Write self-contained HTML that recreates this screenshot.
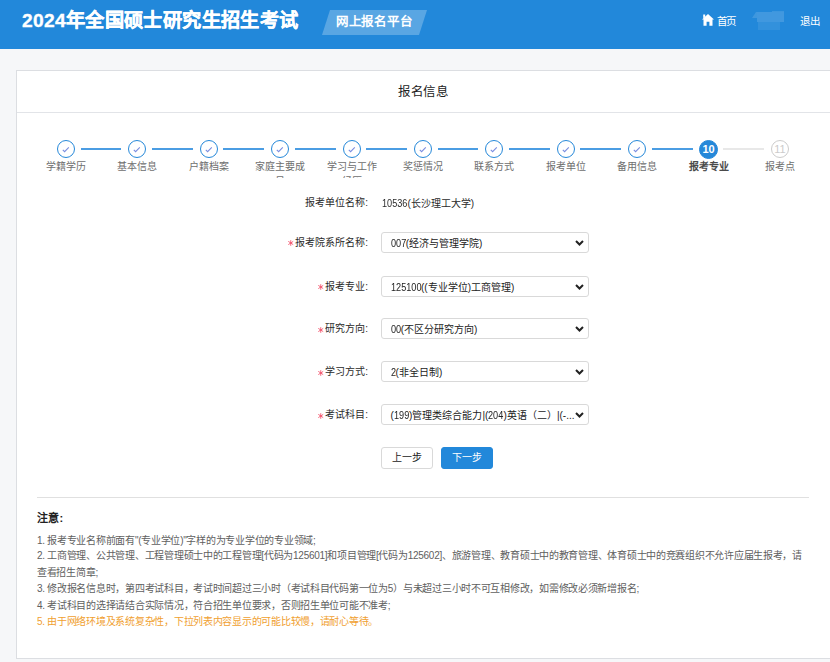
<!DOCTYPE html>
<html lang="zh-CN"><head><meta charset="utf-8">
<style>
*{margin:0;padding:0;box-sizing:border-box}
html,body{width:830px;height:662px;overflow:hidden;background:#f6f7f9;font-family:"Liberation Sans",sans-serif;color:#333}
.hdr{position:absolute;left:0;top:0;width:830px;height:49px;background:#2288da}
.ttl{position:absolute;left:22px;top:7.3px;font-size:19.2px;letter-spacing:0.35px;font-weight:bold;color:#fff;-webkit-text-stroke:0.35px #fff;line-height:28px;white-space:nowrap}
.badge{position:absolute;left:322px;top:10px;width:106px;height:25px}
.badge svg{position:absolute;left:0;top:0}
.badge span{position:absolute;left:14px;top:0;line-height:25px;font-size:12.5px;letter-spacing:-0.3px;font-weight:bold;color:#fff;white-space:nowrap}
.nav{position:absolute;top:12px;line-height:20px;font-size:11px;color:#fff;white-space:nowrap}
.card{position:absolute;left:16px;top:70px;width:830px;height:589px;background:#fff;border:1px solid #dcdee2}
.ch{position:absolute;left:0;top:0;width:100%;height:42px;border-bottom:1px solid #e2e4e8}
.ch span{position:absolute;left:381px;top:12.5px;font-size:12.5px;letter-spacing:-0.3px;line-height:16px;color:#222;white-space:nowrap}
.st{position:absolute;top:140px;width:18px;height:18px;border-radius:50%;border:1.3px solid #2588d9}
.st svg{position:absolute;left:4px;top:5px}
.ln{position:absolute;top:148.3px;height:1.5px;background:#4b9de3}
.ln.g{background:#e8e8e8}
.lb{position:absolute;top:159px;width:52px;height:19px;overflow:hidden;text-align:center;font-size:10px;line-height:15px;color:#6e6e6e;font-weight:500}
.fl{position:absolute;left:0;width:368px;font-size:10px;line-height:14px;color:#2a2a2a;font-weight:500;white-space:nowrap;text-align:right}
.fv{position:absolute;left:382px;font-size:10px;line-height:14px;color:#2a2a2a;font-weight:500;white-space:nowrap}
.n{display:inline-block;font-size:11px;transform:scaleX(.83);transform-origin:0 50%}
.fl b{color:#f04848;font-weight:normal;margin-right:2px;position:relative;top:2px;font-size:11px}
.sel{position:absolute;left:381px;width:207.5px;height:21.5px;border:1px solid #d9d9d9;border-radius:3px;background:#fff}
.sel>span{position:absolute;left:8.5px;top:3.5px;font-size:10px;line-height:14px;color:#222;font-weight:500;white-space:nowrap}
.sel svg{position:absolute;right:3.5px;top:7.3px}
.btn{position:absolute;top:447.3px;height:21.5px;border-radius:2px;font-size:10px;line-height:19.5px;text-align:center}
.note{position:absolute;left:37px;font-size:10px;letter-spacing:-0.27px;line-height:14px;color:#606060;white-space:nowrap}
</style></head><body>
<div class="hdr">
  <div class="ttl">2024年全国硕士研究生招生考试</div>
  <div class="badge"><svg width="106" height="25"><polygon points="8,0 105,0 97,25 0,25" fill="rgba(255,255,255,0.25)"/></svg><span>网上报名平台</span></div>
  <svg style="position:absolute;left:702px;top:14px" width="12" height="12"><path d="M6 0 L0 5.6 L1.5 5.6 L1.5 11.7 L4.6 11.7 L4.6 7.8 L7.4 7.8 L7.4 11.7 L10.5 11.7 L10.5 5.6 L12 5.6 Z M1.2 0.6 H3.2 V2.4 L1.2 4.2 Z" fill="#fff"/></svg>
  <div class="nav" style="left:717px;top:11px;font-size:10.5px;letter-spacing:-0.8px">首页</div>
  <div style="position:absolute;left:757px;top:12px;width:27px;height:10px;background:rgba(255,255,255,0.14);filter:blur(0.6px)"></div><div style="position:absolute;left:772px;top:11px;width:12px;height:1px;background:rgba(255,255,255,0.12);filter:blur(0.4px)"></div>
  <svg style="position:absolute;left:751px;top:11px;filter:blur(0.5px)" width="8" height="8"><polygon points="5,1 6,1 6,7 1,7" fill="rgba(255,255,255,0.13)"/></svg>
  <div style="position:absolute;left:758px;top:22px;width:22px;height:8px;background:rgba(255,255,255,0.08);filter:blur(0.6px)"></div>
  <div class="nav" style="left:800px;top:11px;font-size:10.5px">退出</div>
</div>
<div class="card">
  <div class="ch"><span>报名信息</span></div>
</div>
<div id="steps"><div class="st" style="left:57px"><svg width="10" height="8"><path d="M0.8 3.8 L2.6 5.6 L6.8 1.4" stroke="#7a8de0" stroke-width="1.1" fill="none"></path></svg></div><div class="lb" style="left:40px;">学籍学历</div><div class="ln" style="left:80.5px;width:40.900000000000006px"></div><div class="st" style="left:128.4px"><svg width="10" height="8"><path d="M0.8 3.8 L2.6 5.6 L6.8 1.4" stroke="#7a8de0" stroke-width="1.1" fill="none"></path></svg></div><div class="lb" style="left:111.4px;">基本信息</div><div class="ln" style="left:151.9px;width:40.900000000000006px"></div><div class="st" style="left:199.8px"><svg width="10" height="8"><path d="M0.8 3.8 L2.6 5.6 L6.8 1.4" stroke="#7a8de0" stroke-width="1.1" fill="none"></path></svg></div><div class="lb" style="left:182.8px;">户籍档案</div><div class="ln" style="left:223.30000000000004px;width:40.900000000000006px"></div><div class="st" style="left:271.20000000000005px"><svg width="10" height="8"><path d="M0.8 3.8 L2.6 5.6 L6.8 1.4" stroke="#7a8de0" stroke-width="1.1" fill="none"></path></svg></div><div class="lb" style="left:254.20000000000005px;">家庭主要成员</div><div class="ln" style="left:294.70000000000005px;width:40.89999999999998px"></div><div class="st" style="left:342.6px"><svg width="10" height="8"><path d="M0.8 3.8 L2.6 5.6 L6.8 1.4" stroke="#7a8de0" stroke-width="1.1" fill="none"></path></svg></div><div class="lb" style="left:325.6px;">学习与工作经历</div><div class="ln" style="left:366.1px;width:40.89999999999998px"></div><div class="st" style="left:414px"><svg width="10" height="8"><path d="M0.8 3.8 L2.6 5.6 L6.8 1.4" stroke="#7a8de0" stroke-width="1.1" fill="none"></path></svg></div><div class="lb" style="left:397px;">奖惩情况</div><div class="ln" style="left:437.5px;width:40.900000000000034px"></div><div class="st" style="left:485.40000000000003px"><svg width="10" height="8"><path d="M0.8 3.8 L2.6 5.6 L6.8 1.4" stroke="#7a8de0" stroke-width="1.1" fill="none"></path></svg></div><div class="lb" style="left:468.40000000000003px;">联系方式</div><div class="ln" style="left:508.9000000000001px;width:40.89999999999998px"></div><div class="st" style="left:556.8000000000001px"><svg width="10" height="8"><path d="M0.8 3.8 L2.6 5.6 L6.8 1.4" stroke="#7a8de0" stroke-width="1.1" fill="none"></path></svg></div><div class="lb" style="left:539.8000000000001px;">报考单位</div><div class="ln" style="left:580.3000000000001px;width:40.89999999999998px"></div><div class="st" style="left:628.2px"><svg width="10" height="8"><path d="M0.8 3.8 L2.6 5.6 L6.8 1.4" stroke="#7a8de0" stroke-width="1.1" fill="none"></path></svg></div><div class="lb" style="left:611.2px;">备用信息</div><div class="ln" style="left:651.7px;width:40.89999999999998px"></div><div class="st" style="left:699.1px;width:19px;height:19px;background:#2588d9;color:#fff;font-size:11px;font-weight:bold;line-height:17px;text-align:center">10</div><div class="lb" style="left:682.6px;color:#4a4a4a;font-weight:bold;">报考专业</div><div class="ln g" style="left:723.1px;width:40.89999999999998px"></div><div class="st" style="left:771px;border-color:#ccc;color:#ccc;font-size:11px;line-height:16px;text-align:center">11</div><div class="lb" style="left:754px;">报考点</div></div>
<div class="fl" style="top:196px">报考单位名称:</div>
<div class="fv" style="top:196px"><span class="n" style="margin-right:-5.20px">10536</span>(长沙理工大学)</div>

<div class="fl" style="top:235.7px"><svg width="5.5" height="6" style="margin-right:1.5px;vertical-align:-0.5px"><path d="M2.75 0.2 V5.8 M0.3 1.4 L5.2 4.6 M0.3 4.6 L5.2 1.4" stroke="#f24c66" stroke-width="0.85"/></svg>报考院系所名称:</div>
<div class="sel" style="top:231.5px"><span><span class="n" style="margin-right:-3.12px">007</span>(经济与管理学院)</span><svg width="9" height="6"><path d="M1 1 L4.5 4.5 L8 1" stroke="#222" stroke-width="2" fill="none"/></svg></div>

<div class="fl" style="top:279.5px"><svg width="5.5" height="6" style="margin-right:1.5px;vertical-align:-0.5px"><path d="M2.75 0.2 V5.8 M0.3 1.4 L5.2 4.6 M0.3 4.6 L5.2 1.4" stroke="#f24c66" stroke-width="0.85"/></svg>报考专业:</div>
<div class="sel" style="top:275.5px"><span><span class="n" style="margin-right:-6.24px">125100</span>((专业学位)工商管理)</span><svg width="9" height="6"><path d="M1 1 L4.5 4.5 L8 1" stroke="#222" stroke-width="2" fill="none"/></svg></div>

<div class="fl" style="top:322px"><svg width="5.5" height="6" style="margin-right:1.5px;vertical-align:-0.5px"><path d="M2.75 0.2 V5.8 M0.3 1.4 L5.2 4.6 M0.3 4.6 L5.2 1.4" stroke="#f24c66" stroke-width="0.85"/></svg>研究方向:</div>
<div class="sel" style="top:317.5px"><span><span class="n" style="margin-right:-2.08px">00</span>(不区分研究方向)</span><svg width="9" height="6"><path d="M1 1 L4.5 4.5 L8 1" stroke="#222" stroke-width="2" fill="none"/></svg></div>

<div class="fl" style="top:365px"><svg width="5.5" height="6" style="margin-right:1.5px;vertical-align:-0.5px"><path d="M2.75 0.2 V5.8 M0.3 1.4 L5.2 4.6 M0.3 4.6 L5.2 1.4" stroke="#f24c66" stroke-width="0.85"/></svg>学习方式:</div>
<div class="sel" style="top:360.5px"><span><span class="n" style="margin-right:-1.04px">2</span>(非全日制)</span><svg width="9" height="6"><path d="M1 1 L4.5 4.5 L8 1" stroke="#222" stroke-width="2" fill="none"/></svg></div>

<div class="fl" style="top:408px"><svg width="5.5" height="6" style="margin-right:1.5px;vertical-align:-0.5px"><path d="M2.75 0.2 V5.8 M0.3 1.4 L5.2 4.6 M0.3 4.6 L5.2 1.4" stroke="#f24c66" stroke-width="0.85"/></svg>考试科目:</div>
<div class="sel" style="top:403.5px"><span>(<span class="n" style="margin-right:-3.12px">199</span>)管理类综合能力|(<span class="n" style="margin-right:-3.12px">204</span>)英语（二）|(-...</span><svg width="9" height="6"><path d="M1 1 L4.5 4.5 L8 1" stroke="#222" stroke-width="2" fill="none"/></svg></div>

<div class="btn" style="left:381px;width:52px;border:1px solid #d9d9d9;background:#fff;color:#222;border-radius:3px">上一步</div>
<div class="btn" style="left:441px;width:52px;background:#2288da;color:#fff;border:1px solid #2288da;border-radius:3px">下一步</div>

<div style="position:absolute;left:37px;top:497px;width:772px;height:1px;background:#e0e0e0"></div>
<div class="note" style="top:511px;font-size:11px;font-weight:bold;color:#222;letter-spacing:0.3px">注意:</div>
<div class="note" style="top:533.7px">1. 报考专业名称前面有"(专业学位)"字样的为专业学位的专业领域;</div>
<div class="note" style="top:549px">2. 工商管理、公共管理、工程管理硕士中的工程管理[代码为125601]和项目管理[代码为125602]、旅游管理、教育硕士中的教育管理、体育硕士中的竞赛组织不允许应届生报考，请</div>
<div class="note" style="top:566px">查看招生简章;</div>
<div class="note" style="top:582px">3. 修改报名信息时，第四考试科目，考试时间超过三小时（考试科目代码第一位为5）与未超过三小时不可互相修改，如需修改必须新增报名;</div>
<div class="note" style="top:599px">4. 考试科目的选择请结合实际情况，符合招生单位要求，否则招生单位可能不准考;</div>
<div class="note" style="top:615px;color:#f0a030">5. 由于网络环境及系统复杂性，下拉列表内容显示的可能比较慢，请耐心等待。</div>
</body></html>
